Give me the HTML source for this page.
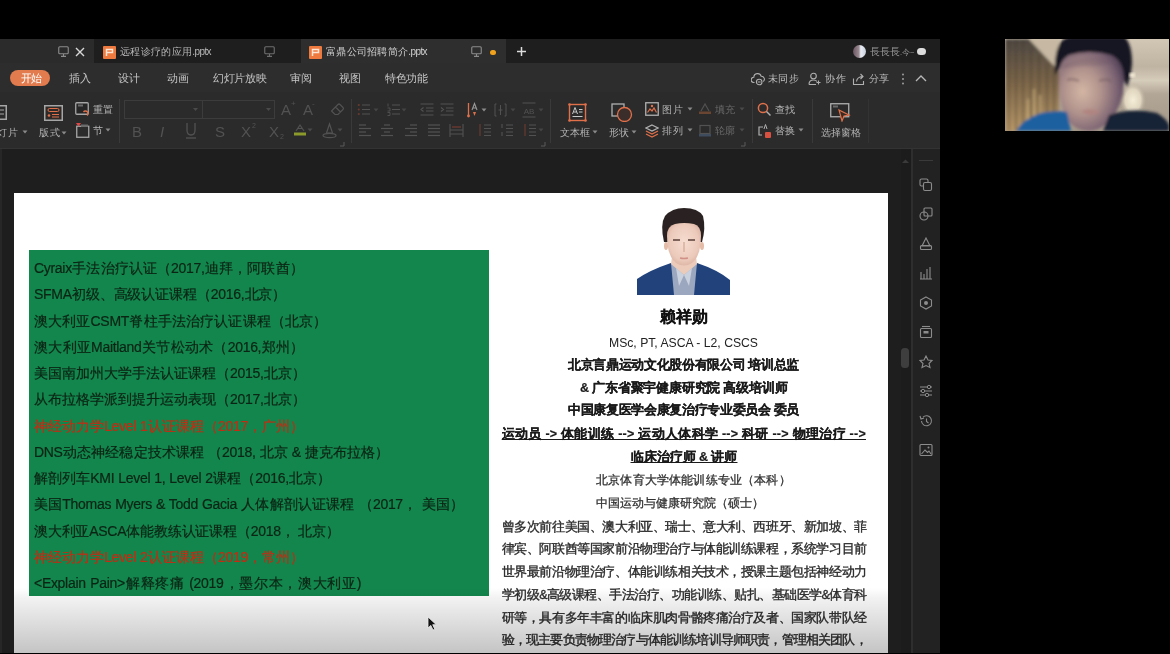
<!DOCTYPE html>
<html><head><meta charset="utf-8">
<style>
*{margin:0;padding:0;box-sizing:border-box}
html,body{width:1170px;height:654px;overflow:hidden;background:#000;font-family:"Liberation Sans",sans-serif;position:relative}
.a{position:absolute;display:block}
.t{position:absolute;white-space:nowrap;line-height:1}
.gl{-webkit-text-stroke:0.2px currentColor;letter-spacing:-0.3px;position:absolute;left:34px;white-space:nowrap;text-align:justify;text-align-last:justify;font-size:14px;line-height:1;color:#0b2414}
.rc{position:absolute;left:501px;width:365px;text-align:center;white-space:nowrap;line-height:1;color:#1a1a1a}
.rl2{-webkit-text-stroke:0.3px currentColor;position:absolute;white-space:nowrap;font-size:12.5px;line-height:1;color:#333}
.rj{-webkit-text-stroke:0.2px currentColor;position:absolute;white-space:nowrap;line-height:1;color:#1a1a1a;text-align:justify;text-align-last:justify}
.pl{-webkit-text-stroke:0.35px currentColor;position:absolute;left:501.7px;width:365px;white-space:nowrap;font-size:12.5px;line-height:1;color:#2a2a2a;text-align:justify;text-align-last:justify}
</style></head>
<body>
<div id="root" style="position:absolute;left:0;top:0;width:1170px;height:654px;overflow:hidden;filter:blur(0.5px)">

<div class="a" style="left:0px;top:39px;width:940px;height:614px;background:#1e1e1e;"></div>
<div class="a" style="left:0px;top:39px;width:940px;height:24px;background:#1e1e1e;"></div>
<div class="a" style="left:0px;top:39px;width:94px;height:24px;background:#2b2b2b;"></div>
<div class="a" style="left:301px;top:39px;width:205px;height:24px;background:#2e2e2e;"></div>
<div class="a" style="left:0px;top:63px;width:940px;height:29px;background:#2d2d2d;"></div>
<div class="a" style="left:0px;top:92px;width:940px;height:57px;background:#2b2b2b;"></div>
<div class="a" style="left:0px;top:148px;width:940px;height:1px;background:#333333;"></div>
<div class="a" style="left:0px;top:149px;width:2px;height:504px;background:#272727;"></div>
<svg class="a" style="left:58px;top:46px;" width="11" height="11" viewBox="0 0 11 11"><rect x="0.75" y="0.75" width="9.5" height="7" rx="1" fill="none" stroke="#8c8c8c" stroke-width="1.1"/><path d="M5.5 8 V10 M3 10.4 H8" stroke="#8c8c8c" stroke-width="1.1"/></svg>
<svg class="a" style="left:75px;top:47px;" width="10" height="10" viewBox="0 0 10 10"><path d="M1 1 L9 9 M9 1 L1 9" stroke="#d8d8d8" stroke-width="1.4"/></svg>
<svg class="a" style="left:103px;top:46px;" width="13" height="13" viewBox="0 0 13 13"><rect x="0" y="0" width="13" height="13" rx="1" fill="#ee7a40"/><path d="M3.5 10 V3.5 H9.5 V6.5 H3.5" fill="none" stroke="#fde6d6" stroke-width="1.5"/></svg>
<div class="t" style="left:120px;top:47.0px;width:91px;text-align:justify;text-align-last:justify;letter-spacing:-0.6px;font-size:10px;color:#b8b8b8;">远程诊疗的应用.pptx</div>
<svg class="a" style="left:264px;top:46px;" width="11" height="11" viewBox="0 0 11 11"><rect x="0.75" y="0.75" width="9.5" height="7" rx="1" fill="none" stroke="#6e6e6e" stroke-width="1.1"/><path d="M5.5 8 V10 M3 10.4 H8" stroke="#6e6e6e" stroke-width="1.1"/></svg>
<svg class="a" style="left:309px;top:46px;" width="13" height="13" viewBox="0 0 13 13"><rect x="0" y="0" width="13" height="13" rx="1" fill="#ee7a40"/><path d="M3.5 10 V3.5 H9.5 V6.5 H3.5" fill="none" stroke="#fde6d6" stroke-width="1.5"/></svg>
<div class="t" style="left:326px;top:47.0px;width:101px;text-align:justify;text-align-last:justify;letter-spacing:-0.6px;font-size:10px;color:#d0d0d0;">富鼎公司招聘简介.pptx</div>
<svg class="a" style="left:471px;top:46px;" width="11" height="11" viewBox="0 0 11 11"><rect x="0.75" y="0.75" width="9.5" height="7" rx="1" fill="none" stroke="#8c8c8c" stroke-width="1.1"/><path d="M5.5 8 V10 M3 10.4 H8" stroke="#8c8c8c" stroke-width="1.1"/></svg>
<div class="a" style="left:490px;top:49.5px;width:5.5px;height:5.5px;border-radius:50%;background:#f0a21c"></div>
<svg class="a" style="left:516px;top:46px;" width="11" height="11" viewBox="0 0 11 11"><path d="M5.5 1 V10 M1 5.5 H10" stroke="#dcdcdc" stroke-width="1.5"/></svg>
<div class="a" style="left:852.5px;top:44.5px;width:13px;height:13px;border-radius:50%;background:linear-gradient(90deg,#6a5560 0%,#9a8a90 45%,#e8ecf4 60%,#c8d0dc 100%)"></div>
<div class="t" style="left:870px;top:46.5px;font-size:10px;color:#9a9a9a;">長長長<span style="font-size:7.5px">.今~</span></div>
<div class="a" style="left:916.5px;top:47.5px;width:9px;height:7px;border-radius:4px;background:#dcdcdc"></div>
<div class="a" style="left:10px;top:69.5px;width:40px;height:16.5px;border-radius:8.5px;background:#e27b4e"></div>
<div class="t" style="left:20.5px;top:72.8px;width:21px;text-align:justify;text-align-last:justify;letter-spacing:-0.6px;font-size:11px;color:#ffffff;">开始</div>
<div class="t" style="left:69px;top:73.0px;width:21.5px;text-align:justify;text-align-last:justify;letter-spacing:-0.6px;font-size:11px;color:#c4c4c4;">插入</div>
<div class="t" style="left:117.7px;top:73.0px;width:21.5px;text-align:justify;text-align-last:justify;letter-spacing:-0.6px;font-size:11px;color:#c4c4c4;">设计</div>
<div class="t" style="left:167px;top:73.0px;width:21.5px;text-align:justify;text-align-last:justify;letter-spacing:-0.6px;font-size:11px;color:#c4c4c4;">动画</div>
<div class="t" style="left:213px;top:73.0px;width:53px;text-align:justify;text-align-last:justify;letter-spacing:-0.6px;font-size:11px;color:#c4c4c4;">幻灯片放映</div>
<div class="t" style="left:290px;top:73.0px;width:21.5px;text-align:justify;text-align-last:justify;letter-spacing:-0.6px;font-size:11px;color:#c4c4c4;">审阅</div>
<div class="t" style="left:338.7px;top:73.0px;width:21.8px;text-align:justify;text-align-last:justify;letter-spacing:-0.6px;font-size:11px;color:#c4c4c4;">视图</div>
<div class="t" style="left:385px;top:73.0px;width:42px;text-align:justify;text-align-last:justify;letter-spacing:-0.6px;font-size:11px;color:#c4c4c4;">特色功能</div>
<svg class="a" style="left:751px;top:72px;" width="15" height="14" viewBox="0 0 15 14"><path d="M3.5 10.5 H2.8 A2.6 2.6 0 0 1 2.8 5.3 A3.8 3.8 0 0 1 10.2 4.2 A3 3 0 0 1 12.3 9.5" fill="none" stroke="#b0b0b0" stroke-width="1.1"/><circle cx="8.2" cy="10" r="2.8" fill="#2d2d2d" stroke="#b0b0b0" stroke-width="1.1"/><path d="M6.8 10 H9.6" stroke="#b0b0b0" stroke-width="1"/></svg>
<div class="t" style="left:768px;top:74.0px;width:30px;text-align:justify;text-align-last:justify;letter-spacing:-0.6px;font-size:10px;color:#bdbdbd;">未同步</div>
<svg class="a" style="left:808px;top:72px;" width="13" height="14" viewBox="0 0 13 14"><circle cx="5.5" cy="4" r="2.8" fill="none" stroke="#b0b0b0" stroke-width="1.1"/><path d="M1 12.5 Q1 8 5.5 8 Q8 8 9 9.5 M1 12.5 H8" fill="none" stroke="#b0b0b0" stroke-width="1.1"/><path d="M10.5 8.5 V12.5 M8.5 10.5 H12.5" stroke="#b0b0b0" stroke-width="1.1"/></svg>
<div class="t" style="left:825px;top:74.0px;width:20px;text-align:justify;text-align-last:justify;letter-spacing:-0.6px;font-size:10px;color:#bdbdbd;">协作</div>
<svg class="a" style="left:852px;top:72px;" width="13" height="14" viewBox="0 0 13 14"><path d="M1.5 6.5 V12.5 H11.5 V9" fill="none" stroke="#b0b0b0" stroke-width="1.1"/><path d="M4.5 9.5 Q5 5 10.5 4.5 M8.5 2 L11 4.5 L8.5 7" fill="none" stroke="#b0b0b0" stroke-width="1.1"/></svg>
<div class="t" style="left:868.5px;top:74.0px;width:20px;text-align:justify;text-align-last:justify;letter-spacing:-0.6px;font-size:10px;color:#bdbdbd;">分享</div>
<svg class="a" style="left:901px;top:72px;" width="4" height="14" viewBox="0 0 4 14"><circle cx="2" cy="2.5" r="0.9" fill="#aaa"/><circle cx="2" cy="7" r="0.9" fill="#aaa"/><circle cx="2" cy="11.5" r="0.9" fill="#aaa"/></svg>
<svg class="a" style="left:915px;top:74px;" width="12" height="8" viewBox="0 0 12 8"><path d="M1 7 L6 2 L11 7" fill="none" stroke="#b8b8b8" stroke-width="1.3"/></svg>
<svg class="a" style="left:-8px;top:105px;" width="15" height="15" viewBox="0 0 15 15"><rect x="0.75" y="0.75" width="13.5" height="13.5" fill="none" stroke="#a6a6a6" stroke-width="1.5"/><path d="M3 5 H12 M3 9 H12" stroke="#a6a6a6" stroke-width="1"/></svg>
<div class="t" style="left:-3px;top:128.0px;width:20px;text-align:justify;text-align-last:justify;letter-spacing:-0.6px;font-size:10px;color:#b5b5b5;">灯片</div>
<svg class="a" style="left:22px;top:130px;" width="6" height="4" viewBox="0 0 6 4"><path d="M0.5 0.5 L5.5 0.5 L3 3.5 Z" fill="#8a8a8a"/></svg>
<svg class="a" style="left:43.5px;top:104.5px;" width="19" height="16" viewBox="0 0 19 16"><rect x="0.75" y="0.75" width="17.5" height="14.5" fill="#2f2a28" stroke="#a6a6a6" stroke-width="1.5"/><rect x="4" y="3.5" width="11" height="3" rx="1.5" fill="none" stroke="#e0704a" stroke-width="1"/><circle cx="5" cy="10.5" r="1.3" fill="#e0704a"/><path d="M8 9.5 H15 M8 12 H15" stroke="#e0704a" stroke-width="1"/></svg>
<div class="t" style="left:39px;top:128.0px;width:20px;text-align:justify;text-align-last:justify;letter-spacing:-0.6px;font-size:10px;color:#b5b5b5;">版式</div>
<svg class="a" style="left:61px;top:130.5px;" width="6" height="4" viewBox="0 0 6 4"><path d="M0.5 0.5 L5.5 0.5 L3 3.5 Z" fill="#8a8a8a"/></svg>
<svg class="a" style="left:75px;top:102px;" width="15" height="15" viewBox="0 0 15 15"><rect x="0.75" y="0.75" width="12.5" height="11.5" rx="1" fill="#262626" stroke="#a6a6a6" stroke-width="1.3"/><path d="M3 3.5 H8" stroke="#6a6a6a" stroke-width="2"/><path d="M8.5 10 A2.5 2.5 0 1 1 12 13.5" fill="none" stroke="#e0704a" stroke-width="1.3"/></svg>
<div class="t" style="left:93px;top:104.5px;width:19px;text-align:justify;text-align-last:justify;letter-spacing:-0.6px;font-size:10px;color:#b5b5b5;">重置</div>
<svg class="a" style="left:75.5px;top:122.5px;" width="14" height="15" viewBox="0 0 14 15"><rect x="0.75" y="3.25" width="12" height="11" fill="none" stroke="#a6a6a6" stroke-width="1.3"/><rect x="5" y="1.5" width="7" height="2.5" fill="#6a6a6a"/><path d="M0 0 H5 L2.5 3.5 Z" fill="#e04848"/></svg>
<div class="t" style="left:93px;top:126.0px;font-size:10px;color:#b5b5b5;">节</div>
<svg class="a" style="left:105.2px;top:127.5px;" width="6" height="4" viewBox="0 0 6 4"><path d="M0.5 0.5 L5.5 0.5 L3 3.5 Z" fill="#8a8a8a"/></svg>
<div class="a" style="left:119px;top:99px;width:1px;height:44px;background:#3a3a3a;"></div>
<div class="a" style="left:124px;top:100px;width:151px;height:19px;border:1px solid #3c3c3c"></div>
<div class="a" style="left:202px;top:100px;width:1px;height:19px;background:#3c3c3c;"></div>
<svg class="a" style="left:193px;top:108px;" width="5" height="3" viewBox="0 0 5 3"><path d="M0 0 H5 L2.5 3 Z" fill="#4a4a4a"/></svg>
<svg class="a" style="left:266px;top:108px;" width="5" height="3" viewBox="0 0 5 3"><path d="M0 0 H5 L2.5 3 Z" fill="#4a4a4a"/></svg>
<div class="t" style="left:281px;top:102.0px;font-size:15px;color:#525252;font-weight:normal">A</div>
<div class="t" style="left:291px;top:100.0px;font-size:8px;color:#525252;">+</div>
<div class="t" style="left:303px;top:102.0px;font-size:15px;color:#525252;">A</div>
<div class="t" style="left:312px;top:100.0px;font-size:8px;color:#525252;">-</div>
<svg class="a" style="left:330px;top:102px;" width="15" height="14" viewBox="0 0 15 14"><path d="M2 8.5 L8 2.5 Q9 1.5 10 2.5 L13 5.5 Q14 6.5 13 7.5 L8 12.5 H5 L2 9.5 Q1 8.5 2 8.5 Z M5.5 5 L10.5 10" fill="none" stroke="#525252" stroke-width="1.2"/></svg>
<div class="t" style="left:132px;top:123.5px;font-size:15px;color:#525252;">B</div>
<div class="t" style="left:160px;top:123.5px;font-size:15px;color:#525252;font-style:italic">I</div>
<svg class="a" style="left:185px;top:122px;" width="12" height="18" viewBox="0 0 12 18"><path d="M2 1 V8 Q2 13 6 13 Q10 13 10 8 V1" fill="none" stroke="#525252" stroke-width="1.3"/><path d="M1 16 H11" stroke="#525252" stroke-width="1.3"/></svg>
<div class="t" style="left:215px;top:123.5px;font-size:15px;color:#525252;">S</div>
<div class="t" style="left:241px;top:123.5px;font-size:15px;color:#525252;">X</div>
<div class="t" style="left:252px;top:121.5px;font-size:7px;color:#525252;">2</div>
<div class="t" style="left:269px;top:123.5px;font-size:15px;color:#525252;">X</div>
<div class="t" style="left:280px;top:132.5px;font-size:7px;color:#525252;">2</div>
<svg class="a" style="left:293px;top:122px;" width="15" height="16" viewBox="0 0 15 16"><path d="M3 9 L7 3 L11 9 M5 6.5 H9" fill="none" stroke="#525252" stroke-width="1.2"/><rect x="1" y="10.5" width="12" height="3" fill="#8c9a2c"/></svg>
<svg class="a" style="left:307px;top:128px;" width="6" height="4" viewBox="0 0 6 4"><path d="M0.5 0.5 L5.5 0.5 L3 3.5 Z" fill="#4a4a4a"/></svg>
<svg class="a" style="left:322px;top:122px;" width="15" height="17" viewBox="0 0 15 17"><path d="M4.5 11 L7.5 2 L10.5 11 Z" fill="none" stroke="#525252" stroke-width="1.2"/><ellipse cx="7.5" cy="13.5" rx="6.5" ry="2.2" fill="none" stroke="#525252" stroke-width="1.2"/></svg>
<svg class="a" style="left:337px;top:128px;" width="6" height="4" viewBox="0 0 6 4"><path d="M0.5 0.5 L5.5 0.5 L3 3.5 Z" fill="#4a4a4a"/></svg>
<svg class="a" style="left:340px;top:142px;" width="5" height="5" viewBox="0 0 5 5"><path d="M4 0 V4 H0" fill="none" stroke="#5a5a5a" stroke-width="1"/></svg>
<div class="a" style="left:351px;top:99px;width:1px;height:44px;background:#3a3a3a;"></div>
<svg class="a" style="left:357px;top:103px;" width="14" height="13" viewBox="0 0 14 13"><circle cx="1.8" cy="2" r="1.1" fill="#6a3a30"/><circle cx="1.8" cy="6.5" r="1.1" fill="#6a3a30"/><circle cx="1.8" cy="11" r="1.1" fill="#6a3a30"/><path d="M5 2 H13 M5 6.5 H13 M5 11 H13" stroke="#525252" stroke-width="1.2"/></svg>
<svg class="a" style="left:372.5px;top:107.5px;" width="6" height="4" viewBox="0 0 6 4"><path d="M0.5 0.5 L5.5 0.5 L3 3.5 Z" fill="#444"/></svg>
<svg class="a" style="left:387px;top:103px;" width="14" height="13" viewBox="0 0 14 13"><path d="M1 0.5 V3.5 M0.5 5 H3 V8 H0.5 M0.5 9.5 H3 V12.5 H0.5" fill="none" stroke="#525252" stroke-width="0.9"/><path d="M5 2 H13 M5 6.5 H13 M5 11 H13" stroke="#525252" stroke-width="1.2"/></svg>
<svg class="a" style="left:401px;top:107.5px;" width="6" height="4" viewBox="0 0 6 4"><path d="M0.5 0.5 L5.5 0.5 L3 3.5 Z" fill="#444"/></svg>
<svg class="a" style="left:419.5px;top:103px;" width="14" height="13" viewBox="0 0 14 13"><path d="M0.5 1 H13.5 M6 5 H13.5 M6 8 H13.5 M0.5 12 H13.5 M3.5 4.5 L1 6.5 L3.5 8.5" fill="none" stroke="#525252" stroke-width="1.1"/></svg>
<svg class="a" style="left:440px;top:103px;" width="14" height="13" viewBox="0 0 14 13"><path d="M0.5 1 H13.5 M6 5 H13.5 M6 8 H13.5 M0.5 12 H13.5 M1 4.5 L3.5 6.5 L1 8.5" fill="none" stroke="#525252" stroke-width="1.1"/></svg>
<svg class="a" style="left:466px;top:102px;" width="14" height="16" viewBox="0 0 14 16"><path d="M2.5 1 V14" stroke="#e0704a" stroke-width="1.3"/><circle cx="2.5" cy="14" r="1.4" fill="#e0704a"/><path d="M6 8 L8.5 1.5 L11 8 M7 6 H10" fill="none" stroke="#9a9a9a" stroke-width="1.1"/><path d="M7 10 L8.5 14 L10 10" fill="#e0704a"/></svg>
<svg class="a" style="left:481px;top:107.5px;" width="6" height="4" viewBox="0 0 6 4"><path d="M0.5 0.5 L5.5 0.5 L3 3.5 Z" fill="#8a8a8a"/></svg>
<svg class="a" style="left:494px;top:103px;" width="13" height="14" viewBox="0 0 13 14"><path d="M2.5 1 H1 V13 H2.5 M10.5 1 H12 V13 H10.5 M6.5 2 V12 M4.5 7 H8.5" fill="none" stroke="#525252" stroke-width="1"/></svg>
<svg class="a" style="left:510px;top:107.5px;" width="6" height="4" viewBox="0 0 6 4"><path d="M0.5 0.5 L5.5 0.5 L3 3.5 Z" fill="#444"/></svg>
<svg class="a" style="left:521.5px;top:102px;" width="14" height="16" viewBox="0 0 14 16"><path d="M0.5 1 H13.5 M0.5 15 H13.5" stroke="#525252" stroke-width="1.1"/><text x="7" y="11.5" font-size="8" text-anchor="middle" fill="#525252" font-family="Liberation Sans">AB</text></svg>
<svg class="a" style="left:538px;top:107.5px;" width="6" height="4" viewBox="0 0 6 4"><path d="M0.5 0.5 L5.5 0.5 L3 3.5 Z" fill="#444"/></svg>
<svg class="a" style="left:358.5px;top:124px;" width="13" height="13" viewBox="0 0 13 13"><path d="M0 1 H7" stroke="#525252" stroke-width="1.2"/><path d="M0 4.5 H12" stroke="#525252" stroke-width="1.2"/><path d="M0 8 H7" stroke="#525252" stroke-width="1.2"/><path d="M0 11.5 H12" stroke="#525252" stroke-width="1.2"/></svg>
<svg class="a" style="left:381px;top:124px;" width="13" height="13" viewBox="0 0 13 13"><path d="M3 1 H9" stroke="#525252" stroke-width="1.2"/><path d="M0 4.5 H12" stroke="#525252" stroke-width="1.2"/><path d="M3 8 H9" stroke="#525252" stroke-width="1.2"/><path d="M0 11.5 H12" stroke="#525252" stroke-width="1.2"/></svg>
<svg class="a" style="left:404.5px;top:124px;" width="13" height="13" viewBox="0 0 13 13"><path d="M5 1 H12" stroke="#525252" stroke-width="1.2"/><path d="M0 4.5 H12" stroke="#525252" stroke-width="1.2"/><path d="M5 8 H12" stroke="#525252" stroke-width="1.2"/><path d="M0 11.5 H12" stroke="#525252" stroke-width="1.2"/></svg>
<svg class="a" style="left:427.5px;top:124px;" width="13" height="13" viewBox="0 0 13 13"><path d="M0 1 H12" stroke="#525252" stroke-width="1.2"/><path d="M0 4.5 H12" stroke="#525252" stroke-width="1.2"/><path d="M0 8 H12" stroke="#525252" stroke-width="1.2"/><path d="M0 11.5 H12" stroke="#525252" stroke-width="1.2"/></svg>
<svg class="a" style="left:449px;top:123px;" width="15" height="15" viewBox="0 0 15 15"><path d="M1 1 V14 M14 1 V14 M1 7 H14 M1 11 H14" stroke="#525252" stroke-width="1.1"/><path d="M3 4 H12" stroke="#6a3a30" stroke-width="1.4"/></svg>
<svg class="a" style="left:478px;top:123px;" width="13" height="15" viewBox="0 0 13 15"><path d="M2 1 V13" stroke="#6a3a30" stroke-width="1.2"/><path d="M6 2 H13 M6 5.5 H13 M6 9 H13 M6 12.5 H13" stroke="#525252" stroke-width="1.2"/></svg>
<svg class="a" style="left:500px;top:123px;" width="13" height="15" viewBox="0 0 13 15"><path d="M2 1 V5 M2 9 V13" stroke="#525252" stroke-width="1.1"/><path d="M6 2 H13 M6 5.5 H13 M6 9 H13 M6 12.5 H13" stroke="#525252" stroke-width="1.2"/></svg>
<svg class="a" style="left:523px;top:123px;" width="13" height="15" viewBox="0 0 13 15"><path d="M2 1 V13" stroke="#6a3a30" stroke-width="1.2"/><path d="M6 2 H13 M6 5.5 H13 M6 9 H13 M6 12.5 H13" stroke="#525252" stroke-width="1.2"/></svg>
<svg class="a" style="left:538px;top:128px;" width="6" height="4" viewBox="0 0 6 4"><path d="M0.5 0.5 L5.5 0.5 L3 3.5 Z" fill="#444"/></svg>
<svg class="a" style="left:541px;top:142px;" width="5" height="5" viewBox="0 0 5 5"><path d="M4 0 V4 H0" fill="none" stroke="#5a5a5a" stroke-width="1"/></svg>
<div class="a" style="left:550px;top:99px;width:1px;height:44px;background:#3a3a3a;"></div>
<svg class="a" style="left:568px;top:103px;" width="19" height="19" viewBox="0 0 19 19"><rect x="1.5" y="1.5" width="16" height="16" fill="#2a2a2a" stroke="#e0704a" stroke-width="1.4"/><circle cx="1.5" cy="1.5" r="1.3" fill="#e0704a"/><circle cx="17.5" cy="1.5" r="1.3" fill="#e0704a"/><circle cx="1.5" cy="17.5" r="1.3" fill="#e0704a"/><circle cx="17.5" cy="17.5" r="1.3" fill="#e0704a"/><path d="M4.5 11 L7 4.5 L9.5 11 M5.5 9 H8.5 M11 6.5 H14.5 M11 9 H14.5 M4.5 13.5 H14.5" fill="none" stroke="#c8c8c8" stroke-width="1"/></svg>
<div class="t" style="left:559.5px;top:127.5px;width:29.5px;text-align:justify;text-align-last:justify;letter-spacing:-0.6px;font-size:10px;color:#b5b5b5;">文本框</div>
<svg class="a" style="left:592px;top:130px;" width="6" height="4" viewBox="0 0 6 4"><path d="M0.5 0.5 L5.5 0.5 L3 3.5 Z" fill="#8a8a8a"/></svg>
<svg class="a" style="left:611px;top:103px;" width="22" height="19" viewBox="0 0 22 19"><rect x="1" y="1" width="12" height="12" fill="none" stroke="#b0b0b0" stroke-width="1.3"/><circle cx="13.5" cy="11.5" r="7" fill="#3a2d2a" stroke="#e0704a" stroke-width="1.3"/></svg>
<div class="t" style="left:608.5px;top:128.0px;width:20px;text-align:justify;text-align-last:justify;letter-spacing:-0.6px;font-size:10px;color:#b5b5b5;">形状</div>
<svg class="a" style="left:631px;top:130px;" width="6" height="4" viewBox="0 0 6 4"><path d="M0.5 0.5 L5.5 0.5 L3 3.5 Z" fill="#8a8a8a"/></svg>
<svg class="a" style="left:645px;top:102px;" width="14" height="14" viewBox="0 0 14 14"><rect x="0.75" y="0.75" width="12.5" height="12.5" fill="#2a2a2a" stroke="#b0b0b0" stroke-width="1.3"/><path d="M2.5 10.5 L5 7 L7 9 L9 6 L11.5 10.5" fill="none" stroke="#e0704a" stroke-width="1.2"/><circle cx="7" cy="4" r="1.2" fill="#e0704a"/></svg>
<div class="t" style="left:662px;top:104.5px;width:20px;text-align:justify;text-align-last:justify;letter-spacing:-0.6px;font-size:10px;color:#b5b5b5;">图片</div>
<svg class="a" style="left:686.5px;top:107px;" width="6" height="4" viewBox="0 0 6 4"><path d="M0.5 0.5 L5.5 0.5 L3 3.5 Z" fill="#8a8a8a"/></svg>
<svg class="a" style="left:645px;top:124px;" width="14" height="14" viewBox="0 0 14 14"><path d="M7 1 L13 4 L7 7 L1 4 Z" fill="none" stroke="#b0b0b0" stroke-width="1.2"/><path d="M1 7 L7 10 L13 7 M1 10 L7 13 L13 10" fill="none" stroke="#e0704a" stroke-width="1.2"/></svg>
<div class="t" style="left:662px;top:126.0px;width:20px;text-align:justify;text-align-last:justify;letter-spacing:-0.6px;font-size:10px;color:#b5b5b5;">排列</div>
<svg class="a" style="left:686.5px;top:128px;" width="6" height="4" viewBox="0 0 6 4"><path d="M0.5 0.5 L5.5 0.5 L3 3.5 Z" fill="#8a8a8a"/></svg>
<svg class="a" style="left:697.5px;top:102px;" width="14" height="14" viewBox="0 0 14 14"><path d="M3 9 L7 2 L11 9" fill="none" stroke="#525252" stroke-width="1.2"/><rect x="1" y="9.5" width="12" height="2.5" fill="#6a4632"/></svg>
<div class="t" style="left:715px;top:105.0px;width:19.5px;text-align:justify;text-align-last:justify;letter-spacing:-0.6px;font-size:10px;color:#6a6a6a;">填充</div>
<svg class="a" style="left:739px;top:107px;" width="6" height="4" viewBox="0 0 6 4"><path d="M0.5 0.5 L5.5 0.5 L3 3.5 Z" fill="#4a4a4a"/></svg>
<svg class="a" style="left:697.5px;top:124px;" width="14" height="14" viewBox="0 0 14 14"><rect x="2" y="1.5" width="10" height="8" fill="none" stroke="#525252" stroke-width="1.2"/><rect x="1" y="10" width="12" height="2.5" fill="#3e4c5e"/></svg>
<div class="t" style="left:715px;top:126.0px;width:19.5px;text-align:justify;text-align-last:justify;letter-spacing:-0.6px;font-size:10px;color:#6a6a6a;">轮廓</div>
<svg class="a" style="left:739px;top:128px;" width="6" height="4" viewBox="0 0 6 4"><path d="M0.5 0.5 L5.5 0.5 L3 3.5 Z" fill="#4a4a4a"/></svg>
<svg class="a" style="left:741px;top:142px;" width="5" height="5" viewBox="0 0 5 5"><path d="M4 0 V4 H0" fill="none" stroke="#5a5a5a" stroke-width="1"/></svg>
<div class="a" style="left:751.5px;top:99px;width:1px;height:44px;background:#3a3a3a;"></div>
<svg class="a" style="left:757px;top:102px;" width="15" height="15" viewBox="0 0 15 15"><circle cx="6" cy="6" r="4.6" fill="none" stroke="#e0704a" stroke-width="1.5"/><path d="M9.5 9.5 L13.5 13.5" stroke="#b0b0b0" stroke-width="1.5"/></svg>
<div class="t" style="left:775px;top:105.0px;width:19px;text-align:justify;text-align-last:justify;letter-spacing:-0.6px;font-size:10px;color:#b5b5b5;">查找</div>
<svg class="a" style="left:757px;top:123px;" width="15" height="16" viewBox="0 0 15 16"><path d="M6 4 H2 V12 H5" fill="none" stroke="#b0b0b0" stroke-width="1.2"/><path d="M7 6 L8.5 1.5 L10 6" fill="none" stroke="#b0b0b0" stroke-width="1"/><rect x="8" y="9" width="6" height="6" rx="1" fill="#d85040"/></svg>
<div class="t" style="left:775px;top:126.0px;width:19px;text-align:justify;text-align-last:justify;letter-spacing:-0.6px;font-size:10px;color:#b5b5b5;">替换</div>
<svg class="a" style="left:798px;top:128px;" width="6" height="4" viewBox="0 0 6 4"><path d="M0.5 0.5 L5.5 0.5 L3 3.5 Z" fill="#8a8a8a"/></svg>
<div class="a" style="left:812px;top:99px;width:1px;height:44px;background:#3a3a3a;"></div>
<svg class="a" style="left:830px;top:103px;" width="21" height="19" viewBox="0 0 21 19"><rect x="0.75" y="0.75" width="18" height="13" fill="#2a2a2a" stroke="#b0b0b0" stroke-width="1.3"/><path d="M3 3.5 H8" stroke="#6a6a6a" stroke-width="2"/><path d="M9 7 L19 12 L14 13 L12 18 Z" fill="#3a2a24" stroke="#e0704a" stroke-width="1.2"/></svg>
<div class="t" style="left:821px;top:127.5px;width:39px;text-align:justify;text-align-last:justify;letter-spacing:-0.6px;font-size:10px;color:#b5b5b5;">选择窗格</div>
<div class="a" style="left:868px;top:99px;width:1px;height:44px;background:#333;"></div>
<div class="a" style="left:901px;top:149px;width:10px;height:504px;background:#1c1c1c;"></div>
<svg class="a" style="left:901px;top:158px;" width="9" height="6" viewBox="0 0 9 6"><path d="M1 5 L4.5 1.5 L8 5 Z" fill="#3a3a3a"/></svg>
<div class="a" style="left:901px;top:348px;width:7.5px;height:20px;border-radius:3.5px;background:#3e3e3e"></div>
<div class="a" style="left:911px;top:149px;width:1.5px;height:504px;background:#2e2e2e;"></div>
<div class="a" style="left:912.5px;top:149px;width:27.5px;height:504px;background:#222222;"></div>
<div class="a" style="left:919px;top:160px;width:14px;height:1px;background:#3a3a3a;"></div>
<div class="a" style="left:14px;top:193px;width:874px;height:460px;background:#ffffff;"></div>
<div class="a" style="left:28.5px;top:250px;width:460px;height:345.8px;background:#12864c;"></div>
<div class="gl" style="top:261.2px;width:269.4px">Cyraix手法治疗认证（2017,迪拜，阿联酋）</div>
<div class="gl" style="top:287.4px;width:252.0px">SFMA初级、高级认证课程（2016,北京）</div>
<div class="gl" style="top:313.7px;width:293.0px">澳大利亚CSMT脊柱手法治疗认证课程（北京）</div>
<div class="gl" style="top:339.9px;width:270.0px">澳大利亚Maitland关节松动术（2016,郑州）</div>
<div class="gl" style="top:366.2px;width:271.5px">美国南加州大学手法认证课程（2015,北京）</div>
<div class="gl" style="top:392.4px;width:271.5px">从布拉格学派到提升运动表现（2017,北京）</div>
<div class="gl" style="top:418.7px;width:270.0px;color:#c42c14">神经动力学Level 1认证课程（2017，广州）</div>
<div class="gl" style="top:444.9px;width:355.0px">DNS动态神经稳定技术课程 （2018, 北京 &amp; 捷克布拉格）</div>
<div class="gl" style="top:471.2px;width:297.0px">解剖列车KMI Level 1, Level 2课程（2016,北京）</div>
<div class="gl" style="top:497.4px;width:429.7px">美国Thomas Myers &amp; Todd Gacia 人体解剖认证课程 （2017， 美国）</div>
<div class="gl" style="top:523.7px;width:305.7px">澳大利亚ASCA体能教练认证课程（2018， 北京）</div>
<div class="gl" style="top:550.0px;width:270.0px;color:#c42c14">神经动力学Level 2认证课程（2019，常州）</div>
<div class="gl" style="top:576.2px;width:327.0px">&lt;Explain Pain&gt;解释疼痛 (2019，墨尔本，澳大利亚)</div>
<svg class="a" style="left:636px;top:208px" width="96" height="88" viewBox="636 208 96 88">
<defs><filter id="bl" x="-10%" y="-10%" width="120%" height="120%"><feGaussianBlur stdDeviation="0.7"/></filter>
<radialGradient id="sk" cx="0.5" cy="0.45" r="0.6"><stop offset="0" stop-color="#f6ddd0"/><stop offset="0.7" stop-color="#eccabb"/><stop offset="1" stop-color="#d9b0a0"/></radialGradient></defs>
<g filter="url(#bl)">
<path d="M637 279 Q650 270 671 263 L684 272 L697 263 Q718 270 730 280 L730 295 L637 295 Z" fill="#21427c"/>
<path d="M671 263 L684 272 L697 263 L694 295 L674 295 Z" fill="#9ba6bf"/>
<path d="M673 250 L695 250 L697 264 L684 275 L671 264 Z" fill="#eccbbb"/>
<path d="M676 268 L684 275 L679 286 Z M692 268 L684 275 L689 286 Z" fill="#c9d0de"/>
<path d="M664 242 Q660 224 665 216 Q672 208 684 208 Q698 208 703 216 Q706 228 702 242 Z" fill="#2b2321"/>
<path d="M667 236 Q667 226 675 224 Q684 222 694 224 Q701 226 701 236 Q701 256 692 263 Q684 268 676 263 Q667 256 667 236 Z" fill="url(#sk)"/>
<path d="M673 240 h7 M688 240 h7" stroke="#5a4038" stroke-width="1.4"/><path d="M684 242 V252" stroke="#d8b0a0" stroke-width="1.5"/><ellipse cx="666" cy="246" rx="2" ry="4" fill="#e4bca8"/><ellipse cx="702" cy="246" rx="2" ry="4" fill="#e4bca8"/>
<path d="M680 258 q4 1 8 0" stroke="#d09088" stroke-width="1.4" fill="none"/>
</g></svg>
<div class="rj" style="left:660px;width:47.0px;top:309.0px;font-size:16px;font-weight:bold;color:#111">赖祥勋</div>
<div class="rc" style="top:336.9px;font-size:12.2px;color:#222">MSc, PT, ASCA - L2, CSCS</div>
<div class="rj" style="left:568px;width:231.0px;top:358.8px;font-size:12.5px;font-weight:bold;letter-spacing:-0.35px">北京言鼎运动文化股份有限公司 培训总监</div>
<div class="rj" style="left:580px;width:207.0px;top:382.2px;font-size:12.5px;font-weight:bold;letter-spacing:-0.2px">&amp; 广东省聚宇健康研究院 高级培训师</div>
<div class="rj" style="left:568px;width:231.0px;top:404.2px;font-size:12.5px;font-weight:bold;letter-spacing:-0.35px">中国康复医学会康复治疗专业委员会 委员</div>
<div class="rj" style="left:501.7px;width:364.3px;top:427.8px;font-size:12.5px;letter-spacing:0.25px;font-weight:bold;text-decoration:underline">运动员 -&gt; 体能训练 --&gt; 运动人体科学 --&gt; 科研 --&gt; 物理治疗 --&gt;</div>
<div class="rj" style="left:630.5px;width:106.0px;top:451.1px;font-size:12.5px;font-weight:bold;text-decoration:underline">临床治疗师 &amp; 讲师</div>
<div class="rl2" style="left:596px;width:194.6px;text-align:justify;text-align-last:justify;top:474.1px;font-size:11.7px">北京体育大学体能训练专业（本科）</div>
<div class="rl2" style="left:596px;width:168.3px;text-align:justify;text-align-last:justify;top:497.2px;font-size:11.6px">中国运动与健康研究院（硕士）</div>
<div class="pl" style="top:520.8px;letter-spacing:-0.5px">曾多次前往美国、澳大利亚、瑞士、意大利、西班牙、新加坡、菲</div>
<div class="pl" style="top:543.2px;letter-spacing:-0.5px">律宾、阿联酋等国家前沿物理治疗与体能训练课程，系统学习目前</div>
<div class="pl" style="top:566.2px;letter-spacing:-0.5px">世界最前沿物理治疗、体能训练相关技术，授课主题包括神经动力</div>
<div class="pl" style="top:589.0px;letter-spacing:-0.65px">学初级&amp;高级课程、手法治疗、功能训练、贴扎、基础医学&amp;体育科</div>
<div class="pl" style="top:612.0px;letter-spacing:-0.5px">研等，具有多年丰富的临床肌肉骨骼疼痛治疗及者、国家队带队经</div>
<div class="pl" style="top:634.2px;letter-spacing:-0.95px">验，现主要负责物理治疗与体能训练培训导师职责，管理相关团队，</div>
<div class="a" style="left:14px;top:588px;width:874px;height:65px;background:linear-gradient(180deg,rgba(0,0,0,0) 0%,rgba(0,0,0,0.05) 15%,rgba(0,0,0,0.23) 100%)"></div>
<svg class="a" style="left:427px;top:616px;" width="10" height="15" viewBox="0 0 10 15"><path d="M1 1 V12 L3.8 9.4 L6 14 L7.8 13.2 L5.7 8.7 H9.3 Z" fill="#111" stroke="#eee" stroke-width="0.8"/></svg>
<svg class="a" style="left:919px;top:178px;" width="14" height="14" viewBox="0 0 14 14"><rect x="1" y="1" width="8" height="7" rx="1.5" fill="none" stroke="#8c8c8c" stroke-width="1.1"/><rect x="4.5" y="4.5" width="8" height="8" rx="1.5" fill="#222" stroke="#8c8c8c" stroke-width="1.1"/></svg>
<svg class="a" style="left:919px;top:207px;" width="14" height="14" viewBox="0 0 14 14"><circle cx="5" cy="9" r="4" fill="none" stroke="#8c8c8c" stroke-width="1.1"/><rect x="5" y="1" width="8" height="8" rx="1" fill="none" stroke="#8c8c8c" stroke-width="1.1"/></svg>
<svg class="a" style="left:919px;top:237px;" width="14" height="14" viewBox="0 0 14 14"><path d="M7 1 L3 9 H11 Z" fill="none" stroke="#8c8c8c" stroke-width="1.1"/><rect x="1.5" y="8.5" width="11" height="4" rx="1" fill="none" stroke="#8c8c8c" stroke-width="1.1"/></svg>
<svg class="a" style="left:919px;top:266px;" width="14" height="14" viewBox="0 0 14 14"><path d="M1 13 H13 M2 13 V6 M5 13 V8 M8 13 V3 M11 13 V1" fill="none" stroke="#8c8c8c" stroke-width="1.1"/></svg>
<svg class="a" style="left:919px;top:296px;" width="14" height="14" viewBox="0 0 14 14"><path d="M7 1 L12.5 4 V10 L7 13 L1.5 10 V4 Z" fill="none" stroke="#8c8c8c" stroke-width="1.1"/><circle cx="7" cy="7" r="2" fill="#8c8c8c"/></svg>
<svg class="a" style="left:919px;top:325px;" width="14" height="14" viewBox="0 0 14 14"><rect x="1.5" y="3.5" width="11" height="9" rx="1" fill="none" stroke="#8c8c8c" stroke-width="1.1"/><path d="M3 1.5 H11" stroke="#8c8c8c" stroke-width="1.1"/><rect x="4.5" y="6" width="5" height="2.5" fill="#8c8c8c"/></svg>
<svg class="a" style="left:919px;top:355px;" width="14" height="14" viewBox="0 0 14 14"><path d="M7 1 L9 5 L13 5.5 L10 8.5 L11 12.5 L7 10.5 L3 12.5 L4 8.5 L1 5.5 L5 5 Z" fill="none" stroke="#8c8c8c" stroke-width="1.1"/></svg>
<svg class="a" style="left:919px;top:384px;" width="14" height="14" viewBox="0 0 14 14"><path d="M1 3 H13 M1 7 H13 M1 11 H13" stroke="#8c8c8c" stroke-width="1.1"/><circle cx="10" cy="3" r="1.7" fill="#222" stroke="#8c8c8c"/><circle cx="4" cy="7" r="1.7" fill="#222" stroke="#8c8c8c"/><circle cx="8" cy="11" r="1.7" fill="#222" stroke="#8c8c8c"/></svg>
<svg class="a" style="left:919px;top:414px;" width="14" height="14" viewBox="0 0 14 14"><path d="M2.5 7 A5 5 0 1 0 4 3.2" fill="none" stroke="#8c8c8c" stroke-width="1.1"/><path d="M1 2 L2 5 L5 4" fill="none" stroke="#8c8c8c" stroke-width="1.1"/><path d="M7.5 4.5 V7.5 L9.5 9" fill="none" stroke="#8c8c8c" stroke-width="1.1"/></svg>
<svg class="a" style="left:919px;top:443px;" width="14" height="14" viewBox="0 0 14 14"><rect x="1" y="1.5" width="12" height="11" rx="1" fill="none" stroke="#8c8c8c" stroke-width="1.1"/><path d="M2.5 11 L6 7 L8.5 9.5 L10 8 L12 11" fill="none" stroke="#8c8c8c" stroke-width="1.1"/><circle cx="9.5" cy="4.5" r="1" fill="#8c8c8c"/></svg>
<div class="a" style="left:0px;top:652.5px;width:940px;height:2px;background:#000;"></div>
<svg class="a" style="left:1005px;top:39px" width="164" height="92" viewBox="0 0 164 92">
<defs>
<filter id="wb" x="-5%" y="-5%" width="110%" height="110%"><feGaussianBlur stdDeviation="1.6"/></filter>
<filter id="wb2" x="-50%" y="-50%" width="200%" height="200%"><feGaussianBlur stdDeviation="4"/></filter>
<linearGradient id="cur" x1="0" y1="0" x2="0" y2="1"><stop offset="0" stop-color="#4e4842"/><stop offset="0.45" stop-color="#7a6448"/><stop offset="1" stop-color="#b89868"/></linearGradient>
<linearGradient id="wallR" x1="0" y1="0" x2="0" y2="1"><stop offset="0" stop-color="#d2c6b4"/><stop offset="0.3" stop-color="#bfb3a2"/><stop offset="0.45" stop-color="#d6ccba"/><stop offset="0.6" stop-color="#b2a696"/><stop offset="1" stop-color="#a49888"/></linearGradient>
<radialGradient id="face" cx="0.36" cy="0.5" r="0.72"><stop offset="0" stop-color="#d4b6a4"/><stop offset="0.4" stop-color="#b0928c"/><stop offset="0.75" stop-color="#7a6272"/><stop offset="1" stop-color="#44364e"/></radialGradient>
<radialGradient id="glow" cx="0.5" cy="0.5" r="0.5"><stop offset="0" stop-color="#f6eed8"/><stop offset="0.6" stop-color="#e0d6c0"/><stop offset="1" stop-color="#b8ac9a" stop-opacity="0"/></radialGradient>
</defs>
<rect width="164" height="92" fill="url(#wallR)"/>
<ellipse cx="128" cy="61" rx="13" ry="18" fill="url(#glow)"/>
<g filter="url(#wb)">
<path d="M0 0 H24 L54 32 V92 H0 Z" fill="url(#cur)"/>
<path d="M4 0 V92 M11 0 V92 M18 0 V92 M26 8 V92 M34 16 V92 M42 24 V92 M49 30 V92" stroke="#3e342a" stroke-width="2.4" opacity="0.3"/>
<path d="M29 50 V82 M35 56 V80 M23 60 V86" stroke="#e8cc90" stroke-width="2" opacity="0.45"/>
<path d="M24 0 H54 V32 Z" fill="#c6b8a2"/>
<path d="M50 36 Q49 16 54 6 Q58 -2 66 -2 H120 Q127 6 127 24 Q126 38 122 48 L114 30 Q90 16 60 22 Z" fill="#161622"/>
<path d="M54 40 Q53 22 64 16 Q84 10 106 16 Q120 22 119 44 Q118 66 106 80 Q96 92 84 92 Q70 92 62 80 Q54 66 54 40 Z" fill="url(#face)"/>
<path d="M58 26 Q84 14 114 22 Q100 28 84 27 Q70 27 58 30 Z" fill="#6a5462" opacity="0.25"/>
<path d="M62 41 Q68 39 74 42 M94 42 Q100 39 106 42" stroke="#6a5058" stroke-width="1.4" fill="none" opacity="0.8"/>
<path d="M76 72 Q86 68 96 73 Q86 79 76 72 Z" fill="#b08480"/>
<path d="M11 92 Q18 80 36 74 Q50 71 62 73 L66 92 Z" fill="#1a60a0"/>
<path d="M98 92 L104 76 Q128 68 152 74 Q162 80 164 86 V92 Z" fill="#182234"/>
</g>
<ellipse cx="127" cy="36" rx="3" ry="2" fill="#fff6e0" filter="url(#wb)"/>
</svg>
</div></body></html>
